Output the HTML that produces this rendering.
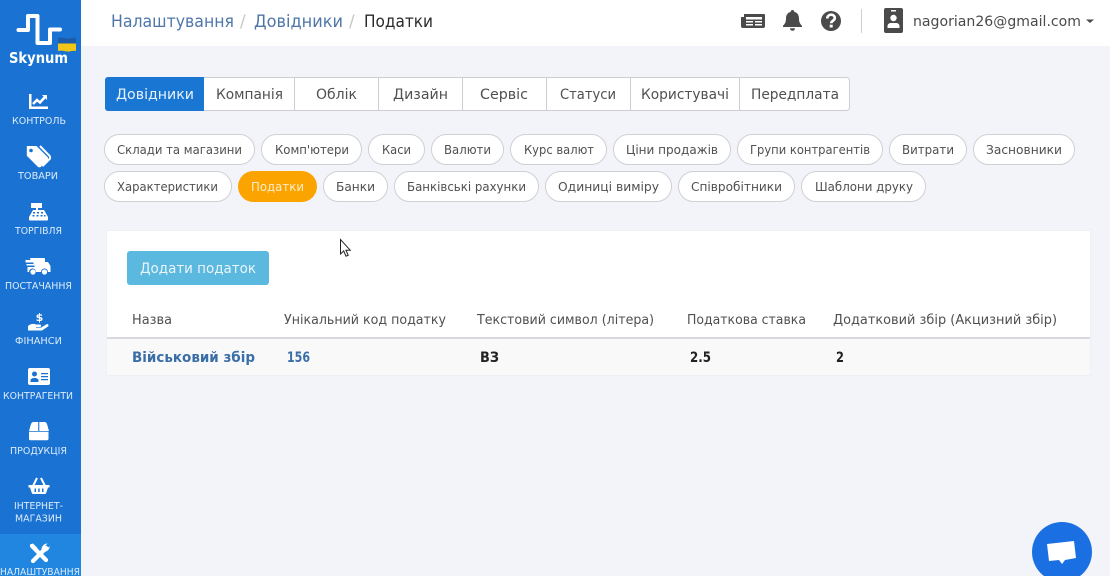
<!DOCTYPE html>
<html lang="uk"><head><meta charset="utf-8"><title>Податки</title>
<style>
html,body{margin:0;padding:0;width:1110px;height:576px;overflow:hidden;background:#f3f4fa}
svg{display:block}
text{font-family:"DejaVu Sans","Liberation Sans",sans-serif;font-size:13px;fill:#505050}
.side text{fill:#dcebfb;font-size:9.5px;text-anchor:middle}
.tab text{font-size:14px;fill:#505050}
.chip text{font-size:12.5px;fill:#505050}
.chip rect{fill:#fff;stroke:#cfd0d4;stroke-width:1}
</style></head><body>
<svg width="1110" height="576" viewBox="0 0 1110 576" xmlns="http://www.w3.org/2000/svg">
<rect width="1110" height="576" fill="#f3f4fa"/>
<!-- header -->
<rect x="81" width="1029" height="46" fill="#fff"/>
<text x="111" y="27" style="font-size:16.5px;fill:#4f76a8" textLength="123" lengthAdjust="spacingAndGlyphs">Налаштування</text>
<text x="240" y="27" style="font-size:16.5px;fill:#c4c6ca">/</text>
<text x="254" y="27" style="font-size:16.5px;fill:#4f76a8" textLength="89" lengthAdjust="spacingAndGlyphs">Довідники</text>
<text x="349" y="27" style="font-size:16.5px;fill:#c4c6ca">/</text>
<text x="364" y="27" style="font-size:16.5px;fill:#2a2a2a" textLength="69" lengthAdjust="spacingAndGlyphs">Податки</text>
<!-- news icon -->
<path fill="#4a4a4a" d="M744 14h20a1 1 0 0 1 1 1v11a2 2 0 0 1-2 2h-20a2 2 0 0 1-2-2v-9h3z"/>
<path fill="#fff" d="M746 17h16v2.500h-16zM746 21h7v1.500h-7zM746 24h7v1.500h-7zM755 21h7v1.500h-7zM755 24h7v1.500h-7z"/>
<!-- bell -->
<path fill="#4a4a4a" d="M792.500 10a1.800 1.800 0 0 1 1.800 1.900c3.300.8 4.700 3.500 4.700 6.600 0 4.200 1.300 5.500 3 7.200v1.300h-19v-1.300c1.700-1.700 3-3 3-7.200 0-3.100 1.400-5.800 4.700-6.600a1.800 1.800 0 0 1 1.800-1.900zM790 28.300h5a2.500 2.500 0 0 1-5 0z"/>
<!-- help -->
<circle cx="831" cy="21" r="10" fill="#4a4a4a"/>
<path fill="none" stroke="#fff" stroke-width="2.600" d="M827.300 18.500c0-5 7.500-5 7.500-.5 0 2.800-3.600 2.500-3.600 5.300"/>
<rect x="829.700" y="24.700" width="3" height="2.800" fill="#fff"/>
<rect x="861" y="9" width="1" height="24" fill="#cfcfcf"/>
<!-- badge -->
<rect x="884" y="8" width="19" height="25" rx="2" fill="#4a4a4a"/>
<rect x="891" y="10" width="5" height="1.500" fill="#fff"/>
<circle cx="893.500" cy="18" r="3.200" fill="#fff"/>
<path fill="#fff" d="M887.500 28v-2c0-1.800 1.500-3 3.500-3h5c2 0 3.500 1.200 3.500 3v2z"/>
<text x="913" y="26" style="font-size:14.5px;fill:#4a4a4a" textLength="168" lengthAdjust="spacingAndGlyphs">nagorian26@gmail.com</text>
<path fill="#4a4a4a" d="M1086 19.500h8l-4 3.500z"/>

<!-- sidebar -->
<rect width="81" height="576" fill="#1a73d2"/>
<rect y="534" width="81" height="42" fill="#2186e0"/>
<path fill="none" stroke="#fff" stroke-width="4" stroke-linejoin="round" stroke-linecap="round" d="M18.500 30H28V16H37.500V43H50V29.500H60"/>
<path fill="#1c5dab" d="M58 38c4-1.500 6 .5 9 .5s6-1.500 9-.5v6H58z"/>
<path fill="#f2c617" d="M58 43.500h18V51c-3-1-6 1-9 .5s-5-1.500-9-.5z"/>
<text x="9" y="63" style="font-size:15px;font-weight:700;fill:#fff" textLength="59" lengthAdjust="spacingAndGlyphs">Skynum</text>
<g class="side">
<text x="39" y="124" textLength="54" lengthAdjust="spacingAndGlyphs">КОНТРОЛЬ</text>
<text x="38" y="179" textLength="40" lengthAdjust="spacingAndGlyphs">ТОВАРИ</text>
<text x="38.500" y="234" textLength="47" lengthAdjust="spacingAndGlyphs">ТОРГІВЛЯ</text>
<text x="38.500" y="289" textLength="67" lengthAdjust="spacingAndGlyphs">ПОСТАЧАННЯ</text>
<text x="38.500" y="344" textLength="47" lengthAdjust="spacingAndGlyphs">ФІНАНСИ</text>
<text x="38" y="399" textLength="70" lengthAdjust="spacingAndGlyphs">КОНТРАГЕНТИ</text>
<text x="38.500" y="454" textLength="57" lengthAdjust="spacingAndGlyphs">ПРОДУКЦІЯ</text>
<text x="38.500" y="509" textLength="49" lengthAdjust="spacingAndGlyphs">ІНТЕРНЕТ-</text>
<text x="38.500" y="521.500" textLength="47" lengthAdjust="spacingAndGlyphs">МАГАЗИН</text>
<text x="40" y="575" textLength="80" lengthAdjust="spacingAndGlyphs">НАЛАШТУВАННЯ</text>
</g>
<!-- контроль -->
<path fill="#fff" d="M29 94h2.500v12.500H48v2.500H29z"/>
<path fill="none" stroke="#fff" stroke-width="2.500" d="M33 104l4-4 3 2.500 5-5.500"/>
<path fill="#fff" d="M42 95h5v5z"/>
<!-- товари -->
<path fill="#fff" d="M27 146h9.500l11 11a2.400 2.400 0 0 1 0 3.200l-6.500 6.500a2.400 2.400 0 0 1-3.200 0l-11-11V146z"/>
<circle cx="31" cy="150.500" r="1.800" fill="#1a73d2"/>
<path fill="none" stroke="#fff" stroke-width="2" d="M40 146l9.500 9.800a2.500 2.500 0 0 1 0 3.400l-7 7"/>
<!-- торгівля -->
<path fill="#fff" d="M31 203h11v5h-4v2h6l4 7v2.500a1 1 0 0 1-1 1H30a1 1 0 0 1-1-1V217l4-7h3v-2h-5z"/>
<path fill="#1a73d2" d="M33 212h2v1.500h-2zM37 212h2v1.500h-2zM41 212h2v1.500h-2zM32.500 215h2v1.500h-2zM36.500 215h2v1.500h-2zM40.500 215h2v1.500h-2zM44 215h1.500v1.500H44z"/>
<!-- постачання -->
<path fill="#fff" d="M30 258h14a1 1 0 0 1 1 1v3h3l2.500 4v6h-2.500a3.500 3.500 0 0 0-7 0h-5a3.500 3.500 0 0 0-7 0h-1.500v-5h7v-1.500h-8V264h7v-1.500h-8V260h5z"/>
<circle cx="33" cy="272" r="2.600" fill="#fff"/><circle cx="44.500" cy="272" r="2.600" fill="#fff"/>
<!-- фінанси -->
<text x="39.500" y="321" style="font-size:11px;font-weight:700;fill:#fff;text-anchor:middle">$</text>
<path fill="#fff" d="M28 326c3-2.500 5.500-2.500 8-1.500h4c1.500 0 1.500 2.500 0 2.500h-4v.6h5l5.500-3.300c1.500-.7 2.800 1 1.500 2.200l-6 4H28z"/>
<!-- контрагенти -->
<rect x="28" y="368" width="22" height="17" rx="2" fill="#fff"/>
<circle cx="34.500" cy="374" r="2.500" fill="#1a73d2"/>
<path fill="#1a73d2" d="M30.500 382v-1.500c0-1.500 1.500-2.500 4-2.500s4 1 4 2.500V382zM41 373h7v1.300h-7zM41 376h7v1.300h-7zM41 379h7v1.300h-7z"/>
<!-- продукція -->
<path fill="#fff" d="M33 422h5.200v9H29l2-7a3 3 0 0 1 2-2zM39.300 422H45a3 3 0 0 1 2 2l2 7h-9.700zM29 431.800h19.500v7a1.500 1.500 0 0 1-1.500 1.500H30.500a1.500 1.500 0 0 1-1.500-1.500z"/>
<!-- магазин -->
<path fill="none" stroke="#fff" stroke-width="2" d="M33 486l4-8M45 486l-4-8"/>
<path fill="#fff" d="M28.500 485h21v2.500H48l-1.800 5.500a1.500 1.500 0 0 1-1.500 1H33.300a1.500 1.500 0 0 1-1.500-1L30 487.500h-1.500z"/>
<path fill="#1a73d2" d="M34.500 488.500h1.500v3.500h-1.500zM38.200 488.500h1.500v3.500h-1.500zM42 488.500h1.500v3.500H42z"/>
<!-- налаштування -->
<path fill="none" stroke="#fff" stroke-width="4.200" stroke-linecap="round" d="M32 546l14 14"/>
<path fill="none" stroke="#fff" stroke-width="4.200" stroke-linecap="round" d="M46 548L33 561"/>
<path fill="#fff" d="M30 544.500l3-1 4.500 4.500-3 3-4.500-4.500zM41.500 549a6 6 0 0 1 6-5.500l-3 3.200 2 2 3.200-2.500a6 6 0 0 1-6.500 5.800z"/>

<!-- tabs -->
<rect x="105.500" y="77.500" width="744" height="33" rx="3" fill="#fff" stroke="#cdced2"/>
<path fill="#1976d2" d="M108 77h96v34h-96a3 3 0 0 1-3-3V80a3 3 0 0 1 3-3z"/>
<path stroke="#cdced2" d="M294.500 77v34M378.500 77v34M462.500 77v34M546.500 77v34M630.500 77v34M739.500 77v34"/>
<g class="tab">
<text x="116" y="99" style="fill:#e8f2fc" textLength="78" lengthAdjust="spacingAndGlyphs">Довідники</text>
<text x="216" y="99" textLength="67" lengthAdjust="spacingAndGlyphs">Компанія</text>
<text x="316" y="99" textLength="41" lengthAdjust="spacingAndGlyphs">Облік</text>
<text x="393" y="99" textLength="55" lengthAdjust="spacingAndGlyphs">Дизайн</text>
<text x="480" y="99" textLength="48" lengthAdjust="spacingAndGlyphs">Сервіс</text>
<text x="560" y="99" textLength="56" lengthAdjust="spacingAndGlyphs">Статуси</text>
<text x="641" y="99" textLength="88" lengthAdjust="spacingAndGlyphs">Користувачі</text>
<text x="751" y="99" textLength="88" lengthAdjust="spacingAndGlyphs">Передплата</text>
</g>

<!-- chips -->
<g class="chip">
<rect x="104.500" y="134.500" width="150" height="30" rx="15"/><text x="117" y="154" textLength="125" lengthAdjust="spacingAndGlyphs">Склади та магазини</text>
<rect x="261.500" y="134.500" width="100" height="30" rx="15"/><text x="275" y="154" textLength="74" lengthAdjust="spacingAndGlyphs">Комп'ютери</text>
<rect x="368.500" y="134.500" width="56" height="30" rx="15"/><text x="382" y="154" textLength="29" lengthAdjust="spacingAndGlyphs">Каси</text>
<rect x="431.500" y="134.500" width="72" height="30" rx="15"/><text x="444" y="154" textLength="47" lengthAdjust="spacingAndGlyphs">Валюти</text>
<rect x="510.500" y="134.500" width="96" height="30" rx="15"/><text x="524" y="154" textLength="70" lengthAdjust="spacingAndGlyphs">Курс валют</text>
<rect x="613.500" y="134.500" width="117" height="30" rx="15"/><text x="626" y="154" textLength="92" lengthAdjust="spacingAndGlyphs">Ціни продажів</text>
<rect x="737.500" y="134.500" width="145" height="30" rx="15"/><text x="750" y="154" textLength="120" lengthAdjust="spacingAndGlyphs">Групи контрагентів</text>
<rect x="889.500" y="134.500" width="77" height="30" rx="15"/><text x="902" y="154" textLength="52" lengthAdjust="spacingAndGlyphs">Витрати</text>
<rect x="973.500" y="134.500" width="101" height="30" rx="15"/><text x="986" y="154" textLength="76" lengthAdjust="spacingAndGlyphs">Засновники</text>

<rect x="104.500" y="171.500" width="127" height="30" rx="15"/><text x="117" y="191" textLength="101" lengthAdjust="spacingAndGlyphs">Характеристики</text>
<rect x="238" y="171" width="79" height="31" rx="15.500" style="fill:#fba400;stroke:none"/><text x="251" y="191" style="fill:#fdeccb" textLength="53" lengthAdjust="spacingAndGlyphs">Податки</text>
<rect x="323.500" y="171.500" width="64" height="30" rx="15"/><text x="336" y="191" textLength="39" lengthAdjust="spacingAndGlyphs">Банки</text>
<rect x="394.500" y="171.500" width="144" height="30" rx="15"/><text x="407" y="191" textLength="119" lengthAdjust="spacingAndGlyphs">Банківські рахунки</text>
<rect x="545.500" y="171.500" width="126" height="30" rx="15"/><text x="558" y="191" textLength="101" lengthAdjust="spacingAndGlyphs">Одиниці виміру</text>
<rect x="678.500" y="171.500" width="116" height="30" rx="15"/><text x="691" y="191" textLength="91" lengthAdjust="spacingAndGlyphs">Співробітники</text>
<rect x="801.500" y="171.500" width="124" height="30" rx="15"/><text x="815" y="191" textLength="98" lengthAdjust="spacingAndGlyphs">Шаблони друку</text>
</g>

<!-- card -->
<rect x="106" y="230" width="985" height="146" fill="#eef0f6"/>
<rect x="107" y="231" width="983" height="144" fill="#fff"/>
<rect x="107" y="339" width="983" height="36" fill="#f9f9fa"/>
<rect x="107" y="337" width="983" height="2" fill="#d9dadf"/>
<rect x="127" y="251" width="142" height="34" rx="3" fill="#5bb8de"/>
<text x="140" y="273" style="font-size:14.500px;fill:#eaf6fb" textLength="116" lengthAdjust="spacingAndGlyphs">Додати податок</text>
<g>
<text x="132" y="324" textLength="40" lengthAdjust="spacingAndGlyphs">Назва</text>
<text x="284" y="324" textLength="162" lengthAdjust="spacingAndGlyphs">Унікальний код податку</text>
<text x="477" y="324" textLength="177" lengthAdjust="spacingAndGlyphs">Текстовий символ (літера)</text>
<text x="687" y="324" textLength="119" lengthAdjust="spacingAndGlyphs">Податкова ставка</text>
<text x="833" y="324" textLength="224" lengthAdjust="spacingAndGlyphs">Додатковий збір (Акцизний збір)</text>
</g>
<text x="132" y="362" style="font-size:14px;font-weight:700;fill:#3a6ea8" textLength="123" lengthAdjust="spacingAndGlyphs">Військовий збір</text>
<text x="287" y="362" style="font-size:14px;font-weight:700;fill:#3a6ea8" textLength="23" lengthAdjust="spacingAndGlyphs">156</text>
<text x="480" y="362" style="font-size:14px;font-weight:700;fill:#222" textLength="19" lengthAdjust="spacingAndGlyphs">ВЗ</text>
<text x="690" y="362" style="font-size:14px;font-weight:700;fill:#222" textLength="21" lengthAdjust="spacingAndGlyphs">2.5</text>
<text x="836" y="362" style="font-size:14px;font-weight:700;fill:#222" textLength="8" lengthAdjust="spacingAndGlyphs">2</text>

<!-- cursor -->
<path fill="#fff" stroke="#222" stroke-width="1" d="M340.500 239.500v14.500l3.200-3 2.300 5.200 2.200-1-2.300-5h4.300z"/>

<!-- chat -->
<circle cx="1062" cy="552" r="30" fill="#1a6fe2"/>
<path fill="#fff" d="M1047 544l27-3 2 17-11 2-3 4-3-4-10 1z"/>
</svg>
</body></html>
